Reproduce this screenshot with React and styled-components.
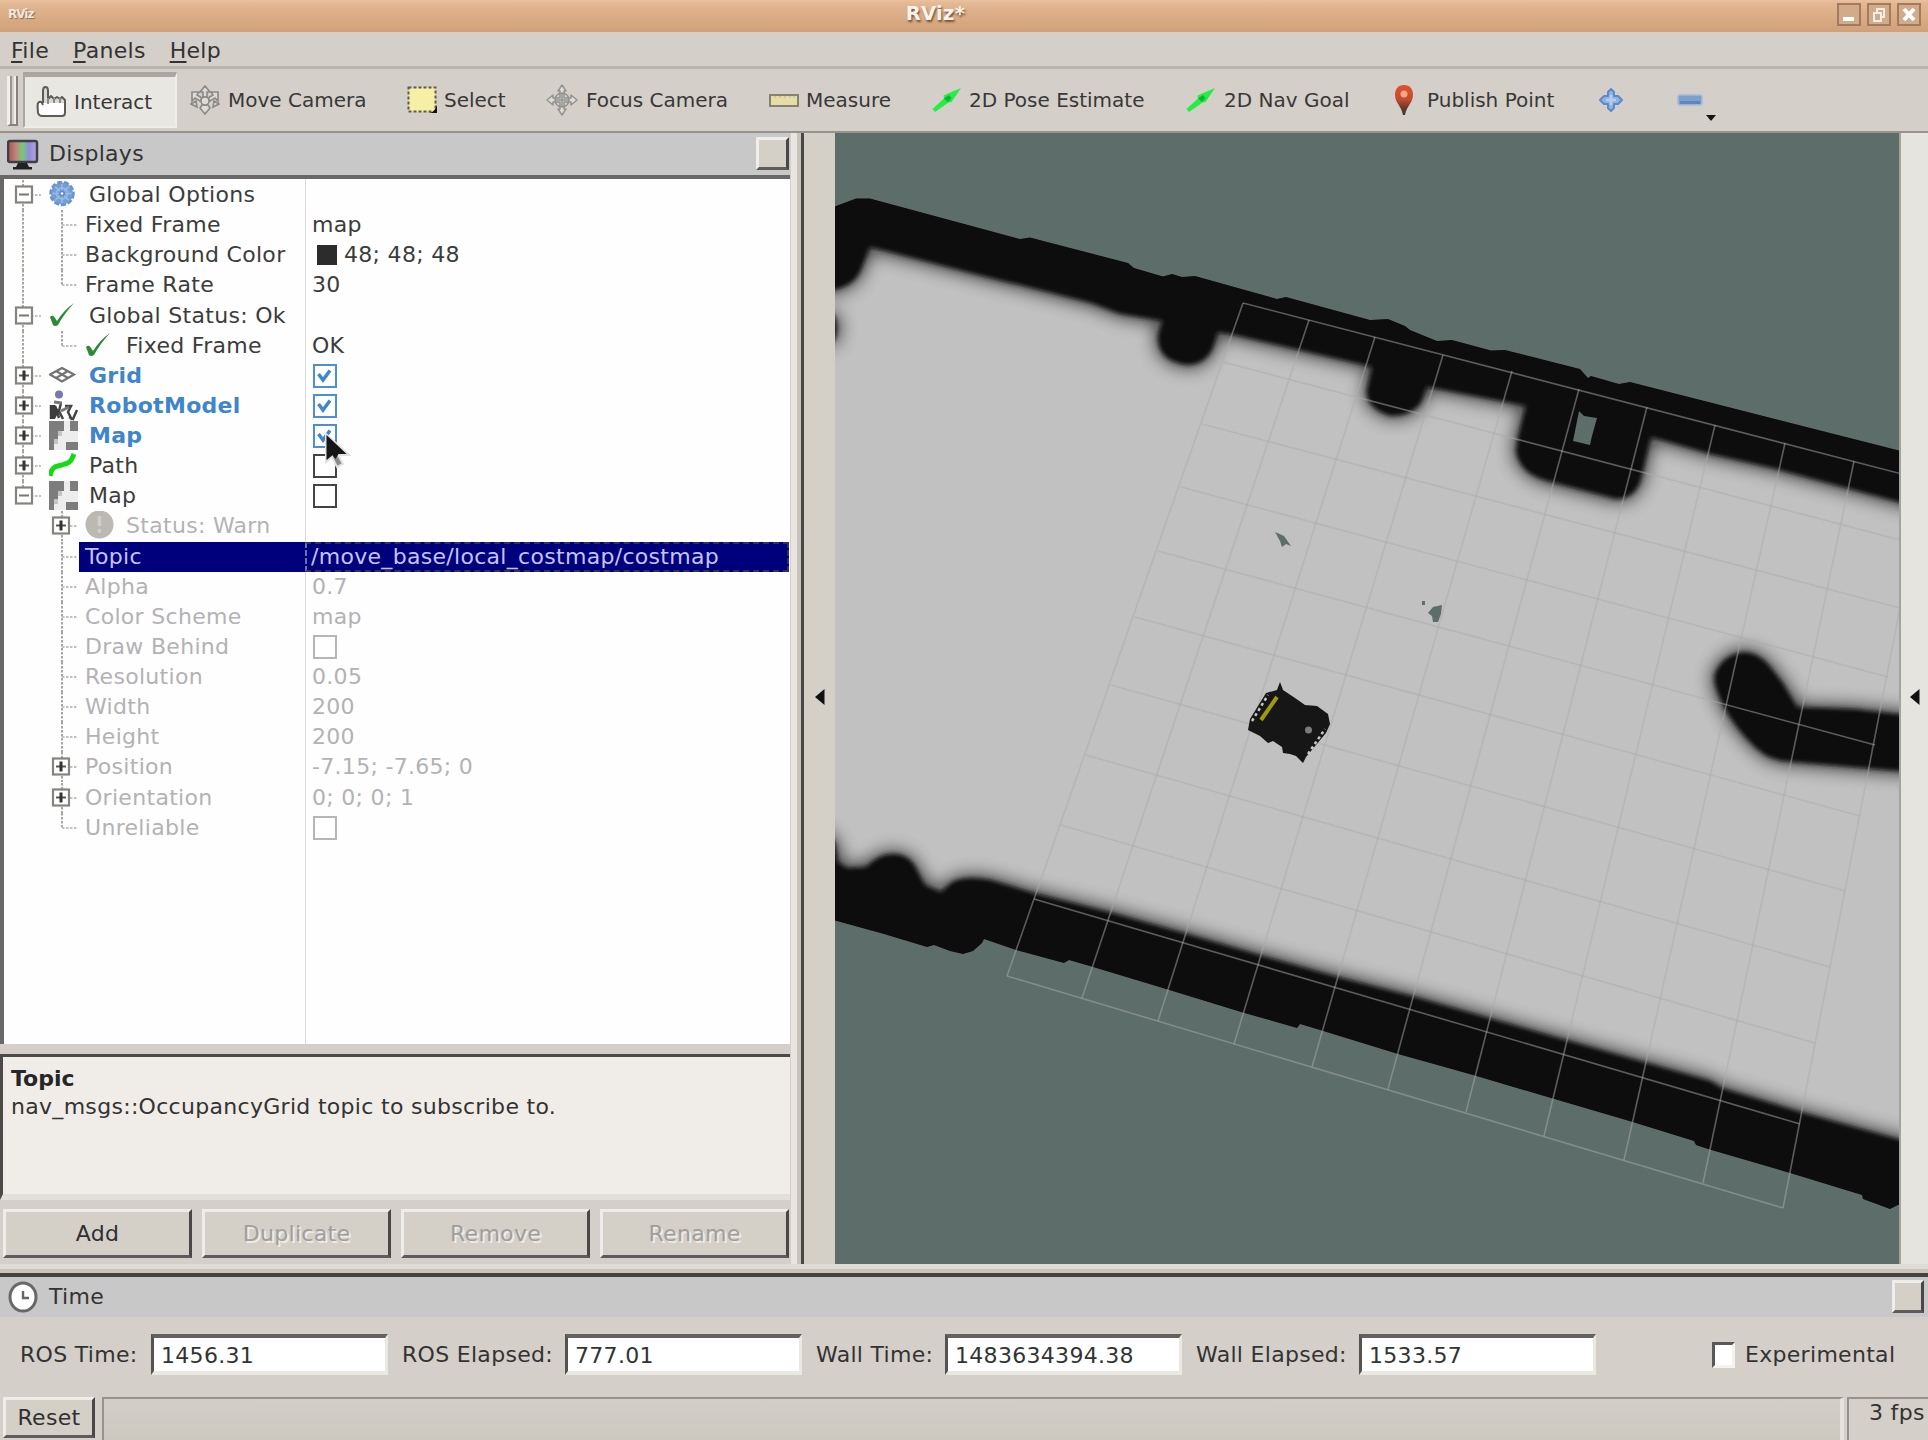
import React from "react";
import styled, { createGlobalStyle, css } from "styled-components";

const FONT = '"DejaVu Sans", "Liberation Sans", sans-serif';

const GlobalStyle = createGlobalStyle`
  * { box-sizing: border-box; }
  html, body { margin: 0; padding: 0; background: #d4d0c8; }
  body { overflow: hidden; }
`;

const Window = styled.div`
  width: 1928px;
  height: 1440px;
  display: flex;
  flex-direction: column;
  background: #d4cfc8;
  color: #333;
  font: 22px/1.2 ${FONT};
  letter-spacing: 0.3px;
  white-space: nowrap;
  overflow: hidden;
`;

/* ---------- title bar ---------- */
const TitleBar = styled.header`
  height: 32px;
  flex: none;
  display: grid;
  grid-template-columns: 90px 1fr 90px;
  align-items: start;
  padding: 0 7px 0 8px;
  background: linear-gradient(#ecc09d 0, #e2b793 12%, #d9aa83 60%, #d1a078 100%);
`;
const AppMark = styled.span`
  padding-top: 7px;
  font-size: 12px;
  line-height: 15px;
  font-weight: bold;
  color: #f0e6dc;
  letter-spacing: -1px;
  text-shadow: 1px 1px 1px #80705f;
`;
const WindowTitle = styled.h1`
  margin: 0;
  padding-right: 58px;
  text-align: center;
  font-size: 19.5px;
  line-height: 28px;
  font-weight: bold;
  color: #faf1ea;
  text-shadow: 1px 2px 2px rgba(90, 60, 35, 0.8);
`;
const WindowButtons = styled.div`
  display: flex;
  justify-content: flex-end;
  gap: 6px;
  padding-top: 3px;
`;
const WindowButton = styled.span`
  width: 24px;
  height: 23px;
  border: 2px solid #a17b5d;
  background: #d2ab8a;
  display: flex;
`;

/* ---------- menu and toolbar ---------- */
const MenuBar = styled.nav`
  height: 37px;
  flex: none;
  display: flex;
  gap: 24px;
  padding: 5px 0 0 11px;
  line-height: 28px;
  border-bottom: 3px solid #b9b6ad;
`;
const MenuItem = styled.span``;
const Accelerator = styled.u`
  text-decoration-thickness: 2px;
  text-underline-offset: 3px;
`;
const ToolBar = styled.div`
  height: 64px;
  flex: none;
  display: flex;
  align-items: flex-start;
  padding: 3px 0 0 7px;
  border-bottom: 2px solid #96938d;
  font-size: 20px;
  letter-spacing: 0;
`;
const Handle = styled.span`
  width: 11px;
  height: 50px;
  margin: 4px 5px 0 0;
  border: solid #85827c;
  border-width: 0 2px 2px 0;
  border-left: 3px solid #f2f0ec;
  background: linear-gradient(90deg, #9a9791 2px, #d4d0c8 2px, #d4d0c8 4px, #f0eeea 4px);
`;
const Tool = styled.button`
  width: ${(p) => p.$width}px;
  height: 56px;
  flex: none;
  display: flex;
  align-items: center;
  margin: 0;
  padding: 0 0 0 ${(p) => (p.$pressed ? 11 : 0)}px;
  border: 0;
  background: none;
  font: inherit;
  letter-spacing: inherit;
  color: #383838;
  ${(p) => p.$pressed && css`
    margin-right: 13px;
    border: solid #aaa7a0;
    border-width: 5px 2px 2px 2px;
    border-right-color: #efede9;
    border-bottom-color: #efede9;
    background: #e9e7e2;
  `}
`;
const ToolIcon = styled.span`
  width: ${(p) => p.$slot || 38}px;
  flex: none;
  display: flex;
`;

/* ---------- central area ---------- */
const Workspace = styled.main`
  height: 1131px;
  flex: none;
  display: flex;
`;
const DisplaysDock = styled.section`
  width: 797px;
  flex: none;
  display: flex;
  flex-direction: column;
  padding-right: 7px;
  box-shadow: inset -6px 0 0 #e9e6e1;
`;
const DockTitle = styled.div`
  height: ${(p) => p.$height}px;
  flex: none;
  display: flex;
  align-items: center;
  padding: 0 ${(p) => p.$right}px 0 7px;
  background: #c9c8c9;
`;
const DockName = styled.span`
  flex: 1;
  padding-left: ${(p) => p.$gap}px;
`;
const Raised = css`
  border: 3px solid;
  border-color: #efede9 #4a4846 #5e5c5a #efede9;
  background: #d4d0c8;
`;
const DockClose = styled.span`
  width: ${(p) => p.$width}px;
  height: 33px;
  margin-bottom: 1px;
  ${Raised}
`;
const Tree = styled.div`
  height: 869px;
  flex: none;
  position: relative;
  overflow: hidden;
  padding-top: 1px;
  border: solid #6a6866;
  border-width: 4px 0 0 4px;
  background: linear-gradient(90deg, #fefefe 301px, #dcdcdc 301px, #dcdcdc 302px, #fefefe 302px);
`;
const Row = styled.div`
  height: 30.14px;
  display: flex;
  color: ${(p) => (p.$enabled ? "#3f85cc" : p.$dim ? "#b3b2b4" : "#3c3c3c")};
`;
const NameCell = styled.div`
  width: 301px;
  flex: none;
  display: flex;
  align-items: center;
`;
const IconSlot = styled.span`
  width: ${(p) => p.$width}px;
  flex: none;
  display: flex;
`;
const RowLabel = styled.span`
  flex: 1;
  line-height: 30.14px;
  font-weight: ${(p) => (p.$bold ? "bold" : "normal")};
  padding-left: ${(p) => p.$pad || 0}px;
  ${(p) => p.$selected && css`background: #00007c; color: #c4c4fa;`}
`;
const ValueCell = styled.div`
  flex: 1;
  display: flex;
  align-items: center;
  gap: 8px;
  line-height: 30px;
  padding-left: 8px;
  ${(p) => p.$selected && css`
    margin-right: 1px;
    padding-left: 5px;
    border: 2px dashed #30305c;
    border-left-color: #6c6cb0;
    background: #00007c;
    color: #c4c4fa;
    line-height: 26px;
  `}
`;
const ValueText = styled.span`
  margin-left: -1px;
`;
const Swatch = styled.span`
  width: 20px;
  height: 20px;
  margin-left: 4px;
  background: #2c2c2c;
`;
const Check = styled.span`
  width: 24px;
  height: 24px;
  display: flex;
  border: 2.5px solid ${(p) => (p.$on ? "#4d90d2" : p.$dim ? "#b7b6b4" : "#444")};
  background: #fff;
`;
const Pointer = styled.svg`
  position: absolute;
  left: 320px;
  top: 254px;
`;
const HelpPane = styled.div`
  height: 146px;
  flex: none;
  margin-top: 10px;
  padding: 8px 8px;
  border: solid #4c4a48;
  border-width: 3px 0 0 3px;
  border-bottom: 6px solid #e3e0db;
  background: #f0ede8;
  line-height: 28px;
`;
const HelpTitle = styled.strong`
  display: block;
  color: #262626;
  letter-spacing: 0;
`;
const ButtonRow = styled.div`
  display: grid;
  grid-template-columns: repeat(4, 1fr);
  gap: 10px;
  padding: 9px 1px 0 3px;
`;
const PushButton = styled.button`
  height: ${(p) => p.$height || 49}px;
  padding: ${(p) => p.$drop || 0}px 0 0;
  font: inherit;
  letter-spacing: inherit;
  color: ${(p) => (p.$dim ? "#a19f9a" : "#303030")};
  text-shadow: ${(p) => (p.$dim ? "2px 2px 0 #eeece8" : "none")};
  ${Raised}
`;
const ResetButton = styled(PushButton)`
  width: 92px;
  flex: none;
`;
const Splitter = styled.div`
  width: ${(p) => p.$width}px;
  flex: none;
  display: flex;
  align-items: center;
  justify-content: center;
  padding-bottom: 4px;
  background: ${(p) => p.$bg};
  border-left: ${(p) => p.$edge};
`;
const Viewport = styled.svg`
  width: 1064px;
  height: 1131px;
  flex: none;
  display: block;
`;

/* ---------- time panel and status bar ---------- */
const TimeDock = styled.section`
  height: 133px;
  flex: none;
  display: flex;
  flex-direction: column;
  border-top: 5px solid #dedcd6;
`;
const TimeTop = styled.div`
  flex: none;
  padding-top: 4px;
  background: #cac4bb;
  border-bottom: 4px solid #454341;
`;
const TimeFields = styled.div`
  display: flex;
  align-items: center;
  padding: 17px 0 0 20px;
`;
const FieldLabel = styled.label`
  width: ${(p) => p.$width}px;
  flex: none;
  padding-top: 1px;
`;
const Field = styled.span`
  width: 237px;
  height: 41px;
  flex: none;
  margin-right: ${(p) => p.$after}px;
  padding-left: 7px;
  line-height: 35px;
  border: solid;
  border-width: 4px 3px 4px 3px;
  border-color: #646260 #eae8e3 #eae8e3 #555351;
  background: #fff;
`;
const OptionBox = styled.span`
  width: 23px;
  height: 26px;
  flex: none;
  margin-right: 10px;
  border: 3px solid;
  border-color: #5a5856 #f4f2ef #f4f2ef #5a5856;
  background: #fff;
`;
const StatusBar = styled.footer`
  flex: 1;
  display: flex;
  padding-left: 3px;
`;
const StatusWell = styled.div`
  flex: 1;
  margin: 0 3px 0 7px;
  border: solid #96938d;
  border-width: 2px 0 0 2px;
  border-right: 4px solid #e6e3de;
  background: linear-gradient(#d3cfc8, #ccc8c0);
`;
const FrameRate = styled.div`
  width: 81px;
  padding: 1px 0 0 20px;
  border: solid #96938d;
  border-width: 2px 0 0 2px;
`;

/* ---------- icons ---------- */
const HandIcon = () => (
  <svg width="31" height="33" viewBox="0 0 31 33">
    <path d="M7 18V5q0-3 2.500-3T12 5v8l14-1q3 0 3 4v12q0 3-3 3H6q-3 0-4-3L1.500 21q0-5 4-4z" fill="#d9d7d2" />
    <path d="M3 18h25v9q0 4-3 4H6q-3 0-3-4z" fill="#fff" />
    <path d="M7 18V6q0-4 2.500-4T12 6v8l3-3 3 3 3-2 3 2 2-2 3 3v13q0 3-3 3H6q-3 0-4-3L1.500 21q0-5 4-4l1.500 3" fill="none" stroke="#5c5b5a" strokeWidth="2" strokeLinejoin="round" />
    <path d="M12 13v6M18 13v5M24 13v5" fill="none" stroke="#8a8987" strokeWidth="2" />
  </svg>
);
const MoveIcon = () => (
  <svg width="30" height="30" viewBox="0 0 30 30" fill="#dddbd6" stroke="#8b8986" strokeWidth="1.6">
    <path d="M15 1l5 6h-3v5h-4V7h-3zM2 7h7l-2 3 5 3-2 3-5-3-3 3zM28 7h-7l2 3-5 3 2 3 5-3 3 3zM1 19l5-3 1 6zM29 19l-5-3-1 6zM15 29l-5-6 2-3h6l2 3z" />
    <circle cx="15" cy="16" r="4" />
  </svg>
);
const SelectIcon = () => (
  <svg width="31" height="28" viewBox="0 0 31 28">
    <rect x="1.5" y="1.5" width="27" height="24" fill="#f6efa6" stroke="#5e5b46" strokeWidth="2" strokeDasharray="3 2" />
    <path d="M30 19v8h-8q6-1 8-8z" fill="#111" />
  </svg>
);
const FocusIcon = () => (
  <svg width="32" height="32" viewBox="0 0 32 32" fill="#dddcd8" stroke="#949390" strokeWidth="1.5" strokeLinejoin="round">
    <path d="M16 1l4 6h-2v7h7v-3l6 5-6 5v-3h-7v7h2l-4 6-4-6h2v-7H7v3l-6-5 6-5v3h7V7h-2z" />
    <circle cx="16" cy="16" r="7" fill="none" />
    <path d="M16 9v14M9 16h14" />
  </svg>
);
const MeasureIcon = () => (
  <svg width="30" height="13" viewBox="0 0 30 13">
    <rect x="1" y="1" width="28" height="11" fill="#e6dca4" stroke="#858173" strokeWidth="2" />
    <path d="M6 2v2M11 2v2M16 2v2M21 2v2M25 2v2" stroke="#bdb58d" />
  </svg>
);
const ArrowIcon = () => (
  <svg width="30" height="26" viewBox="0 0 30 26">
    <path d="M0.500 22L12 11.500l-.5-3L29 1 19.500 15l-3 0.500L3 25z" fill="#22ee44" />
    <path d="M12 11.500l5-3.500 2.500 3-3.500 4z" fill="#0db532" />
  </svg>
);
const PinIcon = () => (
  <svg width="22" height="31" viewBox="0 0 22 31">
    <defs>
      <linearGradient id="pin" x1="0" y1="0" x2="0" y2="1">
        <stop offset="0" stopColor="#e2502f" /><stop offset=".5" stopColor="#c04a30" /><stop offset=".75" stopColor="#6b3a2c" /><stop offset="1" stopColor="#3a3634" />
      </linearGradient>
    </defs>
    <path d="M11 0c6 0 9 4 9 10 0 8-6 10-8 20h-2C8 20 2 18 2 10 2 4 5 0 11 0z" fill="url(#pin)" />
    <circle cx="11" cy="9" r="3.500" fill="#f6a58d" />
  </svg>
);
const PlusIcon = () => (
  <svg width="26" height="26" viewBox="0 0 26 26">
    <path d="M13 2l3 3v4h4l4 4-4 4h-4v4l-3 3-3-3v-4H6l-4-4 4-4h4V5z" fill="#8fb2e2" stroke="#5f8ac8" strokeWidth="2" strokeLinejoin="round" />
    <path d="M8 13h10M13 8v10" stroke="#b5cdee" strokeWidth="2.500" />
  </svg>
);
const MinusIcon = () => (
  <svg width="42" height="26" viewBox="0 0 42 26" overflow="visible">
    <rect x="1" y="8" width="24" height="10" rx="2" fill="#7d9fd0" stroke="#a6bad8" strokeWidth="1.5" />
    <path d="M3 14h20v3H3z" fill="#5f85bd" />
    <path d="M29 28h10l-5 6z" fill="#151515" />
  </svg>
);
const MonitorIcon = () => (
  <svg width="32" height="31" viewBox="0 0 32 31">
    <defs>
      <linearGradient id="screen"><stop offset="0" stopColor="#b0504f" /><stop offset=".3" stopColor="#b98d80" /><stop offset=".5" stopColor="#79c973" /><stop offset=".72" stopColor="#8d8be0" /><stop offset="1" stopColor="#b9a7d8" /></linearGradient>
    </defs>
    <rect x="1" y="2" width="29" height="21" rx="2" fill="url(#screen)" stroke="#403d45" strokeWidth="2.5" />
    <path d="M11 24h9l2 4H9zM6 28h19v2.500H6z" fill="#222" />
  </svg>
);
const ClockIcon = () => (
  <svg width="31" height="32" viewBox="0 0 31 32">
    <ellipse cx="16" cy="16" rx="13" ry="14" fill="#fff" stroke="#686868" strokeWidth="3" />
    <path d="M16 10v7h6" fill="none" stroke="#666" strokeWidth="2.400" />
  </svg>
);
const GearIcon = () => (
  <svg width="28" height="28" viewBox="0 0 28 28">
    <circle cx="13" cy="12.500" r="11" fill="#739fd6" />
    <circle cx="13" cy="12.500" r="11.500" fill="none" stroke="#6a93cb" strokeWidth="2.500" strokeDasharray="5 2" />
    <g stroke="#9dbbe3" strokeWidth="1.400" fill="none"><circle cx="13" cy="12.500" r="5.500" /><path d="M13 3v19M3.500 12.500h19M6 5.500l14 14M20 5.500l-14 14" /></g>
    <circle cx="13" cy="12.500" r="3" fill="#5d8bc8" /><circle cx="13" cy="12.500" r="1.300" fill="#fff" />
  </svg>
);
const TickIcon = () => (
  <svg width="28" height="28" viewBox="0 0 28 28">
    <path d="M1 15q3-3 5 1l2 3Q15 8 25 1 15 12 9 23q-3 2-5 0z" fill="#2a8a35" />
  </svg>
);
const GridIcon = () => (
  <svg width="28" height="20" viewBox="0 0 28 20">
    <path d="M13 2l12 6.500-12 7-12-7zM7 5l12 7M19 5L7 12" fill="none" stroke="#737373" strokeWidth="2.200" />
  </svg>
);
const RobotIcon = () => (
  <svg width="32" height="30" viewBox="0 0 32 30" overflow="visible">
    <circle cx="10" cy="3.500" r="4" fill="#7678ae" />
    <path d="M2 14v14M6 15l4 12M12 12l-2 8 4 8M16 15h6l-3 6 4 8M28 19l-4 9-4-2" fill="none" stroke="#444" strokeWidth="2.500" />
    <path d="M1 14h5l4 6-4 8H1z" fill="#3c3c3c" />
    <path d="M5 11l8 1M12 20l8-4" stroke="#777" strokeWidth="3" />
  </svg>
);
const MapIcon = () => (
  <svg width="32" height="30" viewBox="0 0 32 30">
    <path d="M-2 0h31v29H-2z" fill="#ededed" />
    <path d="M0 0h15v10H9v8H5v11H0zM21 0h8v10h-8zM17 21h12v8H17z" fill="#7d7d7d" />
    <path d="M9 10h4v5H9zM5 18h4v5H5z" fill="#c4c4c4" />
  </svg>
);
const PathIcon = () => (
  <svg width="30" height="28" viewBox="0 0 30 28">
    <path d="M1 24C3 12 9 15 16 12 23 10 23 6 25 2" fill="none" stroke="#12dc12" strokeWidth="5" />
  </svg>
);
const WarnIcon = () => (
  <svg width="30" height="30" viewBox="0 0 30 30">
    <circle cx="14.500" cy="13.500" r="14" fill="#bbb9b2" />
    <path d="M14.500 5v10M14.500 18v4" stroke="#d0cec8" strokeWidth="3.500" />
  </svg>
);

/* connector lines and expander box in front of a row's name */
const BranchLines = styled.svg`
  flex: none;
`;
function Branch({ level, open, expandable, last, rail }) {
  const w = level === 0 ? 45 : 75;
  const x = level === 0 ? 19 : 58;
  const line = { stroke: "#a8a6a0", strokeWidth: 2, strokeDasharray: "2.5 1.500" };
  const bx = level === 0 ? 20 : 57;
  return (
    <BranchLines width={w} height="30.14" viewBox={`0 0 ${w} 30.14`}>
      {rail && <path d="M19 0V30.14" {...line} />}
      <path d={`M${x} 0V${last ? 15 : 30.14}`} {...line} />
      <path d={`M${x} 15H${level === 0 ? 37 : 74}`} {...line} stroke="#c4c2bd" />
      {expandable && (
        <g>
          <rect x={bx - 8} y="6.500" width="16" height="16" fill="#fff" stroke="#85837e" strokeWidth="2.200" />
          <path d={`M${bx - 5} 14.500h10`} stroke={open ? "#777" : "#555"} strokeWidth="2" />
          {!open && <path d={`M${bx} 9.500v10`} stroke="#333" strokeWidth="3" />}
        </g>
      )}
    </BranchLines>
  );
}

const rows = [
  { name: "Global Options", level: 0, open: true, icon: GearIcon },
  { name: "Fixed Frame", level: 1, rail: true, value: "map" },
  { name: "Background Color", level: 1, rail: true, value: "48; 48; 48", swatch: true },
  { name: "Frame Rate", level: 1, rail: true, last: true, value: "30" },
  { name: "Global Status: Ok", level: 0, open: true, icon: TickIcon },
  { name: "Fixed Frame", level: 1, rail: true, last: true, icon: TickIcon, value: "OK" },
  { name: "Grid", level: 0, icon: GridIcon, check: true, enabled: true },
  { name: "RobotModel", level: 0, icon: RobotIcon, check: true, enabled: true },
  { name: "Map", level: 0, icon: MapIcon, check: true, enabled: true },
  { name: "Path", level: 0, icon: PathIcon, check: false },
  { name: "Map", level: 0, open: true, last: true, icon: MapIcon, check: false },
  { name: "Status: Warn", level: 1, plus: true, dim: true, icon: WarnIcon },
  { name: "Topic", level: 1, selected: true, value: "/move_base/local_costmap/costmap" },
  { name: "Alpha", level: 1, dim: true, value: "0.7" },
  { name: "Color Scheme", level: 1, dim: true, value: "map" },
  { name: "Draw Behind", level: 1, dim: true, check: false },
  { name: "Resolution", level: 1, dim: true, value: "0.05" },
  { name: "Width", level: 1, dim: true, value: "200" },
  { name: "Height", level: 1, dim: true, value: "200" },
  { name: "Position", level: 1, dim: true, plus: true, value: "-7.15; -7.65; 0" },
  { name: "Orientation", level: 1, dim: true, plus: true, value: "0; 0; 0; 1" },
  { name: "Unreliable", level: 1, dim: true, last: true, check: false },
];

function PropertyRow({ row }) {
  const Icon = row.icon;
  return (
    <Row $enabled={row.enabled} $dim={row.dim}>
      <NameCell>
        <Branch level={row.level} open={row.open} expandable={row.level === 0 || row.plus} last={row.last} rail={row.rail} />
        {Icon && row.level === 1 && <IconSlot $width={6} />}
        {Icon && <IconSlot $width={row.level === 0 ? 40 : 41}><Icon /></IconSlot>}
        <RowLabel $bold={row.enabled} $selected={row.selected} $pad={row.level === 1 && !Icon ? 6 : 0}>{row.name}</RowLabel>
      </NameCell>
      <ValueCell $selected={row.selected}>
        {row.swatch && <Swatch />}
        {row.check !== undefined && (
          <Check $on={row.check} $dim={row.dim}>
            {row.check && (
              <svg width="19" height="19" viewBox="0 0 19 19"><path d="M3.500 8l4.500 6L15 4.500" fill="none" stroke="#4186cc" strokeWidth="3.500" /></svg>
            )}
          </Check>
        )}
        {row.value && <ValueText>{row.value}</ValueText>}
      </ValueCell>
    </Row>
  );
}

/* ---------- 3D view ---------- */
const OUTER_TOP = "830,209 836,206 856,198.500 870,198.500 1020,239 1030,237.500 1128,263 1134,268 1163,276.500 1172,274 1182,277 1195,276 1277,299 1286,297 1370,320 1388,319 1405,326 1410,330 1437,341 1452,340 1491,350.500 1505,350 1580,369 1588,378 1591,376 1619,384 1630,382 1905,452";
const OUTER_BOTTOM = "1905,1203 1898,1205 1890,1209 1863,1199 1862,1195 1790,1173 1708,1149 1696,1145 1694,1141 1631,1121.500 1551,1098 1473,1075 1398,1054 1320,1030 1300,1024 1297,1028 1241,1012 1166,989 1093,967 1069,960 1064,963 1016,950 984,939 982,943 973,951 963,954 950,951 934,945 927,947 884,934 830,919";
const TOP_WALL = "M820 180H1920V508L1898 502 1772 468 1710 454 1651 437 1642 476Q1637 499 1616 499L1551 482Q1520 475 1516 452 1516 440 1526 406L1427 387 1421 403Q1411 416 1391 416 1364 408 1367 388L1372 367 1234 335 1218 332 1213 348Q1206 364 1188 365 1160 362 1158 341 1157 333 1163 321L1120 314 1091 303 1020 285 1002 281 870 247 861 270Q853 290 820 292Z";
const BOTTOM_WALL = "M820 830L835 842 838 862 847 868 866 867Q878 854 893 854 911 854 918 872L925 885 941 892 952 882Q966 875 991 880L1034 893 1109 912 1184 933 1263 956 1338 977 1412 996 1489 1018 1566 1040 1644 1062 1711 1081 1722 1088 1804 1113 1898 1139 1920 1145V1260H820Z";
const ARM_WALL = "M1920 716L1898 714 1854 709 1797 707 1783 683 1768 664Q1757 652 1743 652 1723 655 1715 673 1711 685 1729 716 1747 743 1765 755 1775 761 1793 762L1898 771H1920Z";
const GRID_TOP = [[1243, 303], [1309, 320], [1375, 337], [1443, 355], [1512, 371], [1579, 389], [1647, 407], [1715, 425], [1785, 443], [1854, 461], [1925, 480]];
const GRID_BOTTOM = [[1007, 976], [1082, 998], [1158, 1021], [1234, 1044], [1312, 1067], [1388, 1089], [1466, 1112], [1544, 1136], [1624, 1160], [1703, 1183], [1783, 1208]];
const GRID_LEFT = [[1243, 303], [1223, 362], [1202, 424], [1181, 487], [1158, 551], [1135, 617], [1111, 685], [1086, 755], [1061, 825], [1034, 899], [1007, 976]];
const GRID_RIGHT = [[1925, 480], [1912, 543], [1900, 608], [1888, 677], [1875, 745], [1860, 816], [1845, 891], [1830, 967], [1815, 1043], [1800, 1124], [1783, 1208]];

const Walls = () => (
  <>
    <path d={TOP_WALL} />
    <path d={BOTTOM_WALL} />
    <path d={ARM_WALL} />
    <ellipse cx="830" cy="328" rx="7" ry="15" />
  </>
);

function Scene() {
  return (
    <Viewport viewBox="835 133 1064 1131">
      <defs>
        <clipPath id="mapArea"><polygon points={`${OUTER_TOP} ${OUTER_BOTTOM}`} /></clipPath>
        <filter id="halo" filterUnits="userSpaceOnUse" x="780" y="100" width="1180" height="1220"><feGaussianBlur stdDeviation="9" /></filter>
        <filter id="edge" filterUnits="userSpaceOnUse" x="780" y="100" width="1180" height="1220"><feGaussianBlur stdDeviation="2.200" /></filter>
      </defs>
      <rect x="834" y="133" width="1065" height="1131" fill="#5c6d6a" />
      <g clipPath="url(#mapArea)">
        <rect x="834" y="133" width="1065" height="1131" fill="#c1c1c1" />
        <g filter="url(#halo)" fill="#101010" stroke="#101010" strokeWidth="5" opacity="0.75"><Walls /></g>
        <g filter="url(#edge)" fill="#0f0f0f"><Walls /></g>
      </g>
      <g fill="#5c6d6a">
        <path d="M1579 411L1584 416 1597 418 1592 436 1590 445 1573 441Z" />
        <path d="M1275 532L1284 536 1291 546 1286 544 1282 547 1280 541Z" />
        <path d="M1433 607L1442 605 1441 614 1438 622H1433L1432 616 1428 613ZM1422 601h3v4h-3z" />
      </g>
      <g stroke="#acacac" strokeOpacity="0.500" strokeWidth="1.600">
        {GRID_TOP.map(([x, y], i) => <line key={`c${i}`} x1={x} y1={y} x2={GRID_BOTTOM[i][0]} y2={GRID_BOTTOM[i][1]} />)}
        {GRID_LEFT.map(([x, y], i) => <line key={`r${i}`} x1={x} y1={y} x2={GRID_RIGHT[i][0]} y2={GRID_RIGHT[i][1]} />)}
      </g>
      <path d="M1280 682L1283 690 1295 698 1305 705 1317 706 1328 714 1330 724 1326 733 1306 757 1303 763 1296 756 1290 754 1283 753 1282 747 1273 741 1268 743 1260 736 1248 730 1250 719 1266 693 1277 690Z" fill="#161616" />
      <path d="M1277 697L1261 720" stroke="#9a9a0c" strokeWidth="4" />
      <path d="M1252 721L1268 695M1308 754L1325 729" stroke="#c8c8c8" strokeWidth="2.500" strokeDasharray="3 3" />
      <circle cx="1308.500" cy="730" r="3.500" fill="#7b7b7b" />
    </Viewport>
  );
}

const CollapseMark = () => (
  <svg width="12" height="18" viewBox="0 0 12 18"><path d="M10.500 1v16L1 9z" fill="#111" /></svg>
);

const tools = [
  { name: "Interact", width: 154, icon: HandIcon, pressed: true },
  { name: "Move Camera", width: 217, icon: MoveIcon },
  { name: "Select", width: 139, icon: SelectIcon, slot: 37 },
  { name: "Focus Camera", width: 223, icon: FocusIcon, slot: 40 },
  { name: "Measure", width: 163, icon: MeasureIcon, slot: 37 },
  { name: "2D Pose Estimate", width: 254, icon: ArrowIcon, slot: 37 },
  { name: "2D Nav Goal", width: 207, icon: ArrowIcon },
  { name: "Publish Point", width: 205, icon: PinIcon, slot: 34 },
  { name: "", width: 79, icon: PlusIcon },
  { name: "", width: 60, icon: MinusIcon },
];

export default function App() {
  return (
    <Window>
      <GlobalStyle />
      <TitleBar>
        <AppMark>RViz</AppMark>
        <WindowTitle>RViz*</WindowTitle>
        <WindowButtons>
          <WindowButton><svg width="20" height="19"><path d="M4 14h11" stroke="#fff" strokeWidth="4" /></svg></WindowButton>
          <WindowButton><svg width="20" height="19"><path d="M8 4h7v8h-3v4H5V8h3zM8 8h4v4" fill="none" stroke="#f8ede4" strokeWidth="2" /></svg></WindowButton>
          <WindowButton><svg width="20" height="19"><path d="M5 4l10 11M15 4L5 15" stroke="#fff" strokeWidth="4" /></svg></WindowButton>
        </WindowButtons>
      </TitleBar>
      <MenuBar>
        {["File", "Panels", "Help"].map((m) => (
          <MenuItem key={m}><Accelerator>{m[0]}</Accelerator>{m.slice(1)}</MenuItem>
        ))}
      </MenuBar>
      <ToolBar>
        <Handle />
        {tools.map(({ name, width, icon: Icon, pressed, slot }, i) => (
          <Tool key={i} $width={width} $pressed={pressed}>
            <ToolIcon $slot={slot}><Icon /></ToolIcon>{name}
          </Tool>
        ))}
      </ToolBar>
      <Workspace>
        <DisplaysDock>
          <DockTitle $height={42} $right={1}>
            <MonitorIcon />
            <DockName $gap={10}>Displays</DockName>
            <DockClose $width={33} />
          </DockTitle>
          <Tree>
            {rows.map((row, i) => <PropertyRow key={i} row={row} />)}
            <Pointer width="29" height="38" viewBox="0 0 29 38">
              <path d="M2 1v28l6-5 5 10 6-3-5-9h11z" fill="#8d8d8d" stroke="#e2e2e2" strokeWidth="2" />
              <path d="M2.500 2v25l6-5 3 4 3-5h8z" fill="#161616" />
            </Pointer>
          </Tree>
          <HelpPane>
            <HelpTitle>Topic</HelpTitle>
            nav_msgs::OccupancyGrid topic to subscribe to.
          </HelpPane>
          <ButtonRow>
            <PushButton $drop={2}>Add</PushButton>
            <PushButton $drop={2} $dim>Duplicate</PushButton>
            <PushButton $drop={2} $dim>Remove</PushButton>
            <PushButton $drop={2} $dim>Rename</PushButton>
          </ButtonRow>
        </DisplaysDock>
        <Splitter $width={4} $bg="#c8c4bc" />
        <Splitter $width={34} $bg="#d4d0c8" $edge="3px solid #4a4846"><CollapseMark /></Splitter>
        <Scene />
        <Splitter $width={29} $bg="#e6e4df" $edge="2px solid #a5a29b"><CollapseMark /></Splitter>
      </Workspace>
      <TimeDock>
        <TimeTop />
        <DockTitle $height={40} $right={4}>
          <ClockIcon />
          <DockName $gap={11}>Time</DockName>
          <DockClose $width={32} />
        </DockTitle>
        <TimeFields>
          <FieldLabel $width={131}>ROS Time:</FieldLabel><Field $after={14}>1456.31</Field>
          <FieldLabel $width={163}>ROS Elapsed:</FieldLabel><Field $after={14}>777.01</Field>
          <FieldLabel $width={129}>Wall Time:</FieldLabel><Field $after={14}>1483634394.38</Field>
          <FieldLabel $width={163}>Wall Elapsed:</FieldLabel><Field $after={116}>1533.57</Field>
          <OptionBox />
          <FieldLabel $width={156}>Experimental</FieldLabel>
        </TimeFields>
      </TimeDock>
      <StatusBar>
        <ResetButton $height={41} $drop={2}>Reset</ResetButton>
        <StatusWell />
        <FrameRate>3 fps</FrameRate>
      </StatusBar>
    </Window>
  );
}
